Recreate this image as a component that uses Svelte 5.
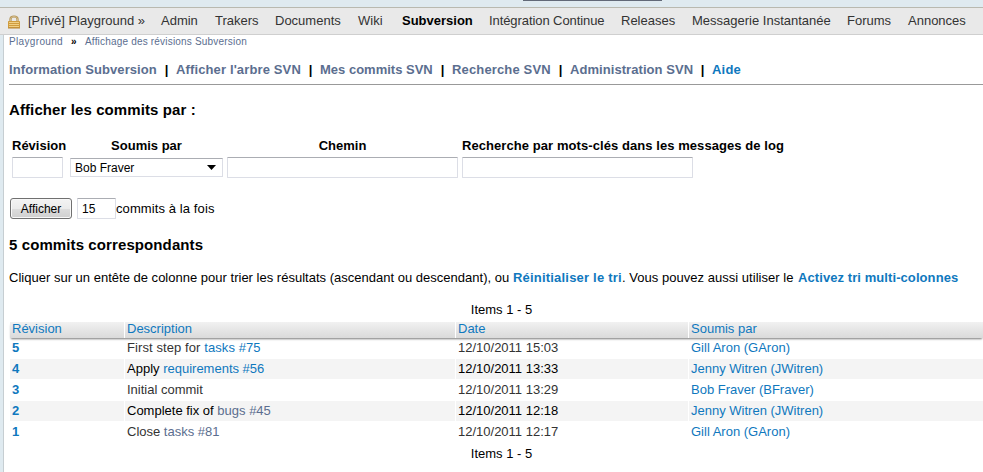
<script>
  const nav = ['Admin', 'Trakers', 'Documents', 'Wiki', 'Subversion', 'Intégration Continue', 'Releases', 'Messagerie Instantanée', 'Forums', 'Annonces'];
  const navWidths = [37, 43, 66, 27, 70, 115, 54, 138, 44, 58];
  const tools = ['Information Subversion', "Afficher l'arbre SVN", 'Mes commits SVN', 'Recherche SVN', 'Administration SVN', 'Aide'];
  const toolWidths = [148, 125, 113, 99, 123, 29];
  const toolSpacing = [0.09, 0.13, 0, 0.15, 0.06, 0.2];
  const commits = [
    { id: 5, text: 'First step for', link: 'tasks #75', date: '12/10/2011 15:03', by: 'Gill Aron (GAron)' },
    { id: 4, text: 'Apply', link: 'requirements #56', date: '12/10/2011 13:33', by: 'Jenny Witren (JWitren)' },
    { id: 3, text: 'Initial commit', link: '', date: '12/10/2011 13:29', by: 'Bob Fraver (BFraver)' },
    { id: 2, text: 'Complete fix of', link: 'bugs #45', seen: true, date: '12/10/2011 12:18', by: 'Jenny Witren (JWitren)' },
    { id: 1, text: 'Close', link: 'tasks #81', seen: true, date: '12/10/2011 12:17', by: 'Gill Aron (GAron)' }
  ];
</script>

<div class="page">
  <div class="top"><i></i></div>
  <nav>
    <svg width="12" height="14" viewBox="0 0 12 14">
      <path d="M2.5 7V4Q2.5 1.5 6 1.5T9.5 4v3" fill="none" stroke="#b08f4e" stroke-width="2.2" />
      <path d="M2.5 7V4Q2.5 1.5 6 1.5T9.5 4v3" fill="none" stroke="#dcc699" stroke-width=".8" />
      <rect x="0" y="6" width="12" height="7" rx=".5" fill="#cf9c3e" />
      <path d="M1 7.5h10M1 9.5h10M1 11.5h10" stroke="#f0cf85" />
      <path d="M0 13h12" stroke="#b98634" />
    </svg>
    <span class="project">[Privé] Playground »</span>
    {#each nav as item, i}
      <span class="item" class:active={item === 'Subversion'} style="width:{navWidths[i]}px">{item}</span>
    {/each}
  </nav>
  <main>
    <div class="crumbs"><span class="c1">Playground</span><b>»</b><span class="c2">Affichage des révisions Subversion</span></div>
    <div class="tools">
      {#each tools as t, i}
        {#if i}<em>|</em>{/if}<span class:fresh={t === 'Aide'} style="width:{toolWidths[i]}px;letter-spacing:{toolSpacing[i]}px">{t}</span>
      {/each}
    </div>
    <h3>Afficher les commits par :</h3>
    <div class="form">
      <label class="f1"><span>Révision</span><input /></label>
      <div class="f2"><span>Soumis par</span>
        <div class="select">Bob Fraver<svg width="9" height="5" viewBox="0 0 9 5"><path d="M0 0h9L4.5 5z" fill="#000" /></svg></div>
      </div>
      <label class="f3"><span>Chemin</span><input /></label>
      <label class="f4"><span>Recherche par mots-clés dans les messages de log</span><input /></label>
    </div>
    <div class="submit"><button>Afficher</button><input value="15" /><span>commits à la fois</span></div>
    <h3 class="count">5 commits correspondants</h3>
    <p><span class="p1">Cliquer sur un entête de colonne pour trier les résultats (ascendant ou descendant), ou</span><a class="b1">Réinitialiser le tri</a><span class="p2">. Vous pouvez aussi utiliser le</span><a class="b2">Activez tri multi-colonnes</a></p>
    <div class="items">Items 1 - 5</div>
    <div class="row head"><span>Révision</span><span>Description</span><span>Date</span><span>Soumis par</span></div>
    <div class="rows">
      {#each commits as c, i}
        <div class="row" class:alt={i % 2 === 1}>
          <span><b>{c.id}</b></span><span class:wide={c.id === 5}>{c.text} <a class:seen={c.seen}>{c.link}</a></span><span class="date">{c.date}</span><span><a>{c.by}</a></span>
        </div>
      {/each}
    </div>
    <div class="items">Items 1 - 5</div>
  </main>
</div>

<style>
  .page { width: 983px; height: 472px; overflow: hidden; box-sizing: border-box; background: #dfeaf0; font: 13px/16px "Liberation Sans", Arial, sans-serif; color: #000; display: flex; flex-direction: column; white-space: nowrap; }
  .top { height: 7px; display: flex; flex: none; }
  .top i { width: 139px; height: 1px; margin-left: 523px; background: #626978; }
  nav { height: 28px; flex: none; box-sizing: border-box; border-top: 1px solid #b9b9b0; border-bottom: 1px solid #cfcfcf; background: #e9e9e9; color: #333; display: flex; align-items: center; padding-left: 8px; }
  nav svg { margin-right: 8px; position: relative; top: 1px; }
  .project { width: 116px; }
  .item { margin-left: 17px; flex: none; }
  .item:nth-of-type(7) { letter-spacing: -.08px; }
  .active { font-weight: bold; color: #000; }
  main { flex: 1; margin-left: 3px; border-left: 1px solid #c6ced2; background: #fff; padding-left: 5px; min-width: 0; }
  .crumbs { height: 14px; line-height: 14px; font-size: 10px; color: #5b6e8f; display: flex; }
  .c1 { width: 54px; letter-spacing: .34px; }
  .crumbs b { color: #000; margin: 0 8px; width: 6px; }
  .c2 { letter-spacing: .19px; }
  .tools { display: flex; height: 36px; box-sizing: border-box; border-bottom: 1px solid #999; padding-top: 13px; font-weight: bold; color: #5b6e8f; }
  .tools em { font-style: normal; color: #000; width: 19px; text-align: center; }
  .tools .fresh { color: #0f78be; }
  h3 { margin: 15px 0 0; font-size: 15px; line-height: 20px; letter-spacing: .1px; }
  .form { display: flex; margin: 18px 0 0 3px; font-weight: bold; }
  .form label, .form > div { display: flex; flex-direction: column; }
  .form span { text-align: center; height: 19px; }
  input { font: 12px "Liberation Sans", Arial, sans-serif; box-sizing: border-box; height: 21px; margin: 0; border: 1px solid #dcdee6; border-top-color: #abadb3; border-radius: 1px; padding: 0 4px; outline: 0; background: #fff; color: #000; }
  .f1 { width: 51px; } .f2 { width: 153px; margin: 0 4px 0 7px; } .f3 { width: 231px; } .f4 { margin-left: 4px; width: 323px; }
  .f4 span { letter-spacing: .07px; text-align: left; }
  .f4 input { width: 231px; }
  .select { font-weight: normal; font-size: 12px; height: 19px; margin-top: 1px; box-sizing: border-box; border: 1px solid #dcdee6; border-top-color: #abadb3; padding: 0 6px 0 4px; display: flex; align-items: center; justify-content: space-between; }
  .submit { display: flex; margin: 20px 0 0 1px; height: 21px; align-items: center; letter-spacing: .1px; }
  button { width: 62px; height: 21px; font: 12px "Liberation Sans", Arial, sans-serif; padding: 0; border: 1px solid #707070; border-radius: 3px; background: linear-gradient(#f3f3f3, #ebebeb 50%, #ddd 50%, #cfcfcf); box-shadow: inset 0 0 0 1px #f8f8f8; color: #000; }
  .submit input { width: 39px; margin-left: 5px; }
  .count { margin-top: 16px; }
  p { margin: 15px 0 0; display: flex; }
  a { color: #0f78be; }
  p a { font-weight: bold; }
  .p1 { width: 504px; letter-spacing: .01px; }
  .b1 { width: 109px; letter-spacing: .2px; }
  .p2 { width: 176px; letter-spacing: .03px; }
  .b2 { letter-spacing: .08px; }
  .items { width: 985px; text-align: center; margin-top: 16px; }
  .row { display: grid; grid-template-columns: 114px 330px 232px 298px; column-gap: 1px; height: 20px; line-height: 20px; margin: 0 0 1px 1px; color: #333; }
  .row span { padding-left: 2px; }
  .row b { color: #0f78be; }
  .wide { letter-spacing: .09px; }
  .alt { color: #000; }
  .alt span { background: #f4f4f4; }
  .row .seen { color: #5b6e8f; }
  .head { margin: 4px 0 0 1px; height: 16px; line-height: 14px; box-shadow: 0 2px 2px -1px #777; }
  .head span { height: 16px; color: #0f78be; background: linear-gradient(#f1f1f1, #dadada); }
  .rows + .items { margin-top: 4px; }
</style>
